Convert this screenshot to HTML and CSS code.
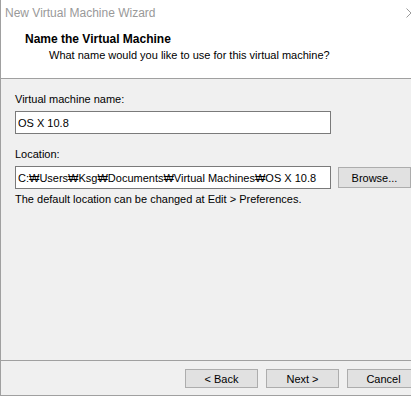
FILE: index.html
```html
<!DOCTYPE html>
<html lang="ko">
<head>
    <meta charset="UTF-8">
    <title>New Virtual Machine Wizard</title>
    <link rel="stylesheet" href="styles.css">
</head>
<body>
    <div class="wizard">
        <div class="titlebar">
            <span class="title">New Virtual Machine Wizard</span>
            <svg class="close" width="10" height="10" viewBox="0 0 10 10">
                <path d="M0.5 0.5 L9.5 9.5 M9.5 0.5 L0.5 9.5" stroke="#9a9a9a" stroke-width="1" fill="none"/>
            </svg>
        </div>

        <div class="header">
            <h2>Name the Virtual Machine</h2>
            <p>What name would you like to use for this virtual machine?</p>
        </div>

        <div class="content">
            <div class="field">
                <label for="vmName">Virtual machine name:</label>
                <input type="text" id="vmName" value="OS X 10.8">
            </div>
            <div class="field">
                <label for="vmLocation">Location:</label>
                <div class="row">
                    <input type="text" id="vmLocation" value="C:₩Users₩Ksg₩Documents₩Virtual Machines₩OS X 10.8">
                    <button type="button" class="browse">Browse...</button>
                </div>
                <div class="hint">The default location can be changed at Edit &gt; Preferences.</div>
            </div>
        </div>

        <div class="footer">
            <button type="button">&lt; Back</button>
            <button type="button">Next &gt;</button>
            <button type="button">Cancel</button>
        </div>
    </div>
</body>
</html>
```

FILE: styles.css
```css
* {
    margin: 0;
    padding: 0;
    box-sizing: border-box;
    font-family: 'Liberation Sans', 'Noto Sans CJK KR', sans-serif;
}

body {
    background-color: #f0f0f0;
    overflow: hidden;
}

.wizard {
    width: 411px;
    height: 396px;
    display: flex;
    flex-direction: column;
    border-left: 1px solid #a0a0a0;
    border-bottom: 1px solid #a0a0a0;
    font-size: 11px;
    color: #000;
    overflow: hidden;
}

.titlebar {
    height: 27px;
    flex: none;
    background-color: white;
    display: flex;
    justify-content: space-between;
    align-items: center;
    padding-left: 4px;
}

.title {
    color: #999;
    font-size: 12px;
    margin-top: -2px;
}

.close {
    flex: none;
    margin-right: -5px;
    margin-top: -1px;
}

.header {
    height: 52px;
    flex: none;
    background-color: white;
    border-bottom: 1px solid #a0a0a0;
    padding: 5px 0 0 24px;
}

.header h2 {
    font-size: 12px;
    font-weight: 700;
    line-height: 15px;
}

.header p {
    padding-left: 24px;
    line-height: 15px;
    margin-top: 1px;
}

.content {
    flex: 1;
    padding: 13px 0 0 14px;
}

.field {
    margin-bottom: 13px;
}

label {
    display: block;
    line-height: 15px;
    margin-bottom: 4px;
}

input {
    width: 316px;
    height: 23px;
    border: 1px solid #7a7a7a;
    background-color: white;
    padding: 0 2px;
    font-size: 11px;
    color: #000;
    outline: none;
}

.row {
    display: flex;
    align-items: flex-start;
    gap: 7px;
}

.hint {
    margin-top: 3px;
    line-height: 15px;
}

button {
    flex: none;
    width: 73px;
    height: 19px;
    background-color: #e1e1e1;
    border: 1px solid #adadad;
    font-size: 11px;
    color: #000;
}

.browse {
    height: 21px;
    margin-top: 1px;
}

.footer {
    flex: none;
    height: 35px;
    border-top: 1px solid #a0a0a0;
    display: flex;
    justify-content: flex-end;
    gap: 8px;
    padding-top: 8px;
    margin-right: -9px;
}
```
